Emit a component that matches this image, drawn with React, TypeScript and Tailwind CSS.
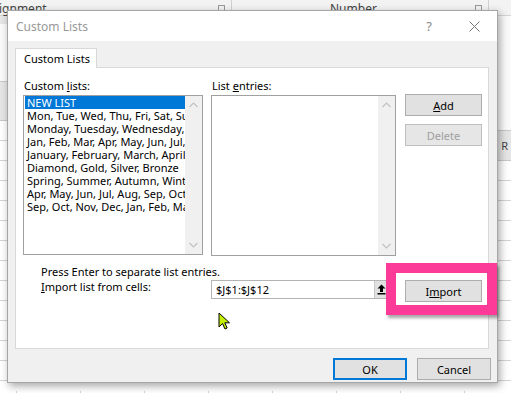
import React from "react";

const lists = [
  "Mon, Tue, Wed, Thu, Fri, Sat, Sun",
  "Monday, Tuesday, Wednesday, Thursday, Friday, Saturday, Sunday",
  "Jan, Feb, Mar, Apr, May, Jun, Jul, Aug, Sep, Oct, Nov, Dec",
  "January, February, March, April, May, June, July, August, September, October, November, December",
  "Diamond, Gold, Silver, Bronze",
  "Spring, Summer, Autumn, Winter",
  "Apr, May, Jun, Jul, Aug, Sep, Oct, Nov, Dec, Jan, Feb, Mar",
  "Sep, Oct, Nov, Dec, Jan, Feb, Mar, Apr, May, Jun, Jul, Aug",
];

function Chevron({ up }: { up?: boolean }) {
  return (
    <svg width="9" height="6" viewBox="0 0 9 6" className="block">
      <polyline
        points={up ? "0.5,5 4.5,1 8.5,5" : "0.5,1 4.5,5 8.5,1"}
        fill="none"
        stroke="#c2c2c2"
        strokeWidth="1.2"
      />
    </svg>
  );
}

function ScrollBar() {
  return (
    <div className="flex w-[17px] flex-col items-center justify-between bg-[#f0f0f0] py-[6px]">
      <Chevron up />
      <Chevron />
    </div>
  );
}

function Button({
  children,
  disabled,
  primary,
  className = "",
}: {
  children: React.ReactNode;
  disabled?: boolean;
  primary?: boolean;
  className?: string;
}) {
  return (
    <div
      className={`flex h-[22px] items-center justify-center bg-[#e1e1e1] ${
        primary ? "border-2 border-[#0078d7]" : "border border-[#adadad]"
      } ${disabled ? "text-[#a0a0a0] border-[#bfbfbf] bg-[#e6e6e6]" : "text-black"} ${className}`}
    >
      {children}
    </div>
  );
}

function Cursor() {
  return (
    <svg width="13" height="18" viewBox="0 0 13 18">
      <path
        d="M1 1 L1 15 L4.5 11.5 L7 17 L9.2 16 L6.8 10.8 L11.5 10.8 Z"
        fill="#c4ef00"
        stroke="#000"
        strokeWidth="1"
        strokeLinejoin="round"
      />
    </svg>
  );
}

export default function App() {
  return (
    <div className="relative h-[393px] w-[511px] overflow-hidden bg-white font-['Noto_Sans',sans-serif] text-[11px] leading-[13px] text-black">
      {/* Excel behind the dialog */}
      <div className="flex h-full flex-col">
        <div className="flex h-[20px] border-b border-[#d4d4d4] bg-[#f3f3f3] text-[12px] text-[#444]">
          <div className="flex w-[232px] items-start justify-between border-r border-[#d0d0d0] pr-[6px]">
            <span className="-ml-[1px] pt-[2px]">ignment</span>
            <span className="mt-[5px] h-[7px] w-[7px] border border-[#999]" />
          </div>
          <div className="flex w-[257px] items-start justify-between border-r border-[#d0d0d0] pl-[98px] pr-[6px]">
            <span className="pt-[2px]">Number</span>
            <span className="mt-[5px] h-[7px] w-[7px] border border-[#999]" />
          </div>
          <div className="flex-1" />
        </div>
        <div className="flex flex-1">
          <div className="flex w-[7px] flex-col">
            <div className="h-[8px] bg-[#e6e6e6]" />
            <div className="h-[57px] bg-[#fafafa]" />
            <div className="h-[40px] border-y border-[#c8c8c8] bg-[#e6e6e6]" />
            {Array.from({ length: 13 }).map((_, i) => (
              <div key={i} className="h-[20px] border-b border-[#d4d4d4]" />
            ))}
          </div>
          <div className="flex flex-1 flex-col">
            <div className="flex-1" />
            <div className="flex h-[10px]">
              <div className="w-[10px] border-r border-[#d4d4d4]" />
              {Array.from({ length: 7 }).map((_, i) => (
                <div key={i} className="w-[64px] border-r border-[#d4d4d4]" />
              ))}
            </div>
          </div>
          <div className="flex w-[13px] flex-col">
            <div className="h-[114px] bg-[#fafafa]" />
            <div className="flex h-[31px] items-center justify-end border-y border-[#c8c8c8] bg-[#e6e6e6] pr-[3px] text-[11px] text-[#444]">
              R
            </div>
            {Array.from({ length: 12 }).map((_, i) => (
              <div key={i} className="h-[20px] border-b border-[#d4d4d4]" />
            ))}
          </div>
        </div>
      </div>

      {/* Dialog window */}
      <div className="absolute left-[7px] top-[10px] flex h-[373px] w-[491px] flex-col border border-[#a6a6a6] bg-[#f0f0f0] shadow-[2px_3px_8px_rgba(0,0,0,0.35)]">
        <div className="flex h-[30px] items-center justify-between bg-white pl-[8px] pr-[17px] text-[12px] text-[#999]">
          <span>Custom Lists</span>
          <div className="flex items-center gap-[37px]">
            <span className="text-[13px] text-[#888]">?</span>
            <svg width="11" height="11" viewBox="0 0 11 11">
              <path d="M0.5 0.5 L10.5 10.5 M10.5 0.5 L0.5 10.5" stroke="#777" strokeWidth="1" />
            </svg>
          </div>
        </div>

        <div className="flex flex-col px-[7px] pt-[7px]">
          <div className="relative z-10 -mb-px flex h-[20px] w-[82px] items-center border border-b-0 border-[#d9d9d9] bg-white pl-[8px]">
            Custom Lists
          </div>
          <div className="flex h-[282px] w-[474px] flex-col border border-[#d9d9d9] bg-white pl-[7px] pt-[11px]">
            <div className="flex">
              <div className="flex w-[180px] flex-col">
                <div className="ml-[1px] h-[14px] leading-[14px]">
                  Custom <u>l</u>ists:
                </div>
                <div className="mt-[2px] flex h-[160px] border border-[#a0a0a0]">
                  <div className="flex min-w-0 flex-1 flex-col overflow-hidden whitespace-nowrap pl-[1px]">
                    <div className="h-[13px] bg-[#0078d7] pl-[2px] text-white">NEW LIST</div>
                    {lists.map((l) => (
                      <div key={l} className="h-[13px] pl-[2px]">
                        {l}
                      </div>
                    ))}
                  </div>
                  <ScrollBar />
                </div>
              </div>
              <div className="ml-[8px] flex w-[185px] flex-col">
                <div className="ml-[1px] h-[14px] leading-[14px]">
                  List <u>e</u>ntries:
                </div>
                <div className="mt-[2px] flex h-[161px] border border-[#a0a0a0]">
                  <div className="flex-1" />
                  <ScrollBar />
                </div>
              </div>
              <div className="ml-[9px] flex w-[77px] flex-col gap-[8px] pt-[15px]">
                <Button>
                  <u>A</u>dd
                </Button>
                <Button disabled>Delete</Button>
              </div>
            </div>

            <div className="ml-[18px] mt-[9px] h-[14px] leading-[14px]">
              Press Enter to separate list entries.
            </div>
            <div className="mt-px flex items-start">
              <div className="ml-[18px] w-[170px] leading-[14px]">
                <u>I</u>mport list from cells:
              </div>
              <div className="flex h-[19px] w-[177px] border border-[#b4b4b4] bg-white">
                <div className="flex flex-1 items-center pl-[4px]">$J$1:$J$12</div>
                <div className="flex w-[13px] items-center justify-center border-l border-[#c8c8c8] bg-[#e1e1e1]">
                  <svg width="9" height="11" viewBox="0 0 9 11">
                    <path d="M4.5 0.5 L8.5 4.5 L6 4.5 L6 8 L3 8 L3 4.5 L0.5 4.5 Z" fill="#000" />
                    <rect x="0.5" y="9" width="8" height="1.5" fill="#000" />
                  </svg>
                </div>
              </div>
              <Button className="ml-[17px] w-[77px]">
                I<u>m</u>port
              </Button>
            </div>
          </div>
        </div>

        <div className="flex justify-end gap-[10px] pr-[6px] pt-[9px]">
          <Button primary className="w-[74px]">
            OK
          </Button>
          <Button className="w-[74px]">Cancel</Button>
        </div>

        {/* Highlight around the Import button */}
        <div className="absolute left-[378px] top-[252px] h-[52px] w-[111px] border-[10px] border-[#fc3a97] shadow-[2px_3px_3px_rgba(0,0,0,0.35)]" />

        <div className="absolute left-[210px] top-[301px]">
          <Cursor />
        </div>
      </div>
    </div>
  );
}
